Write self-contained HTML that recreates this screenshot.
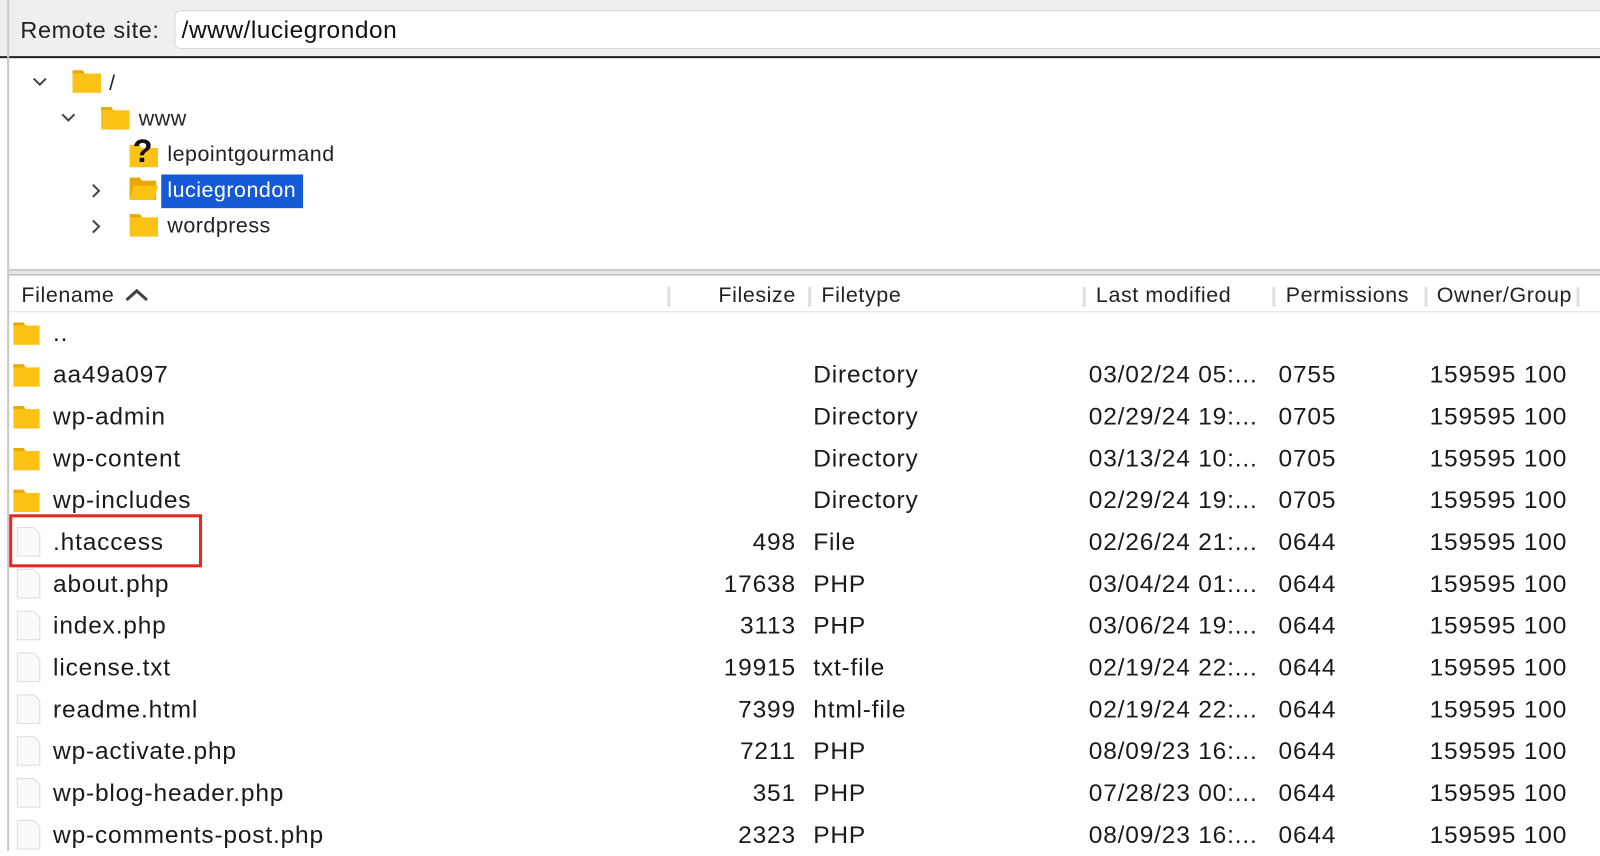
<!DOCTYPE html>
<html><head><meta charset="utf-8"><style>
*{margin:0;padding:0;box-sizing:border-box}
body{width:1600px;height:834px;overflow:hidden;background:#fff;font-family:"Liberation Sans",Arial,sans-serif;color:#1a1a1a;position:relative}
#w{position:absolute;left:0;top:0;width:1600px;height:834px;transform:scale(1.0204);transform-origin:0 0}
.top{position:absolute;left:0;top:0;width:1600px;height:57px;background:#efefef;border-bottom:2px solid #222}
.lb{position:absolute;left:7px;top:0;width:2px;height:834px;background:#c8c8c8}
.lbl{position:absolute;left:20px;top:16px;font-size:23px;letter-spacing:0.6px;color:#222}
.inp{position:absolute;left:171px;top:10px;width:1440px;height:38px;background:#fff;border:1px solid #d8d8d8;border-radius:6px;font-size:24px;letter-spacing:0.5px;padding:5px 6px;color:#111}
.t{position:absolute;font-size:21px;letter-spacing:0.5px;line-height:28px;color:#222}
.fold{position:absolute;width:26px;height:22px}
.split{position:absolute;left:9px;top:264px;width:1591px;height:6px;background:#e6e6e6;border-top:1px solid #aaa;border-bottom:1px solid #aaa}
.hdr{position:absolute;left:9px;top:272px;width:1591px;height:34px;border-bottom:1px solid #e2e2e2;font-size:21px;letter-spacing:0.6px;color:#222}
.hdr span{position:absolute;top:6px}
.sep{position:absolute;top:9px;width:3px;height:20px;background:#e0e0e0}
.r{position:absolute;left:0;width:1600px;height:41px;font-size:24px;letter-spacing:0.8px;line-height:41px;color:#1a1a1a}
.r span{position:absolute;top:0;white-space:nowrap}
.n{left:52px}.s{right:820px;text-align:right}.ty{left:797px}.m{left:1067px}.p{left:1253px}.o{left:1401px}
.fi{position:absolute;left:13px;top:8px;width:26px;height:24px}
</style></head><body><div id="w">
<div class="top"><div class="lbl">Remote site:</div><div class="inp">/www/luciegrondon</div></div>
<div class="lb"></div>

<svg style="position:absolute;left:30px;top:73px" width="18" height="14"><path d="M3 4l6 6 6-6" fill="none" stroke="#444" stroke-width="2"/></svg>
<svg class="fold" style="left:71px;top:67px;width:28px;height:24px" viewBox="0 0 28 24"><path d="M0 2h10l2 3h16v19H0z" fill="#fdc216"/><path d="M0 2h10l2 3h-12z" fill="#e9a800"/></svg>
<div class="t" style="left:107px;top:68px">/</div>

<svg style="position:absolute;left:58px;top:108px" width="18" height="14"><path d="M3 4l6 6 6-6" fill="none" stroke="#444" stroke-width="2"/></svg>
<svg class="fold" style="left:99px;top:103px;width:28px;height:24px" viewBox="0 0 28 24"><path d="M0 2h10l2 3h16v19H0z" fill="#fdc216"/><path d="M0 2h10l2 3h-12z" fill="#e9a800"/></svg>
<div class="t" style="left:136px;top:103px">www</div>

<svg class="fold" style="left:127px;top:140px;width:28px;height:24px" viewBox="0 0 28 24"><path d="M0 2h10l2 3h16v19H0z" fill="#fdc216"/></svg>
<div style="position:absolute;left:130px;top:130px;font-size:32px;font-weight:bold;color:#111;line-height:36px">?</div>
<div class="t" style="left:164px;top:138px">lepointgourmand</div>

<svg style="position:absolute;left:87px;top:178px" width="14" height="18"><path d="M4 3l6 6-6 6" fill="none" stroke="#444" stroke-width="2"/></svg>
<svg class="fold" style="left:127px;top:172px;width:28px;height:24px" viewBox="0 0 28 24"><path d="M0 2h10l2 3h14v19H0z" fill="#e9a800"/><path d="M4 10h24l-4 14H0z" fill="#fdc216"/></svg>
<div style="position:absolute;left:158px;top:171px;width:139px;height:33px;background:#1559d6"></div>
<div class="t" style="left:164px;top:173px;color:#fff">luciegrondon</div>

<svg style="position:absolute;left:87px;top:213px" width="14" height="18"><path d="M4 3l6 6-6 6" fill="none" stroke="#444" stroke-width="2"/></svg>
<svg class="fold" style="left:127px;top:208px;width:28px;height:24px" viewBox="0 0 28 24"><path d="M0 2h10l2 3h16v19H0z" fill="#fdc216"/><path d="M0 2h10l2 3h-12z" fill="#e9a800"/></svg>
<div class="t" style="left:164px;top:208px">wordpress</div>

<div class="split"></div>
<div class="hdr">
<span style="left:12px">Filename</span>
<svg style="position:absolute;left:112px;top:9px" width="26" height="16"><path d="M3 13l10-9 10 9" fill="none" stroke="#444" stroke-width="3"/></svg>
<div class="sep" style="left:645px"></div>
<span style="right:820px">Filesize</span>
<div class="sep" style="left:783px"></div>
<span style="left:796px">Filetype</span>
<div class="sep" style="left:1052px"></div>
<span style="left:1065px">Last modified</span>
<div class="sep" style="left:1238px"></div>
<span style="left:1251px">Permissions</span>
<div class="sep" style="left:1387px"></div>
<span style="left:1399px">Owner/Group</span>
<div class="sep" style="left:1536px"></div>
</div>

<div class="r" style="top:306px"><svg class="fi" viewBox="0 0 26 24"><path d="M0 2h10l2 3h14v19H0z" fill="#fdc216"/><path d="M0 2h10l2 3h-12z" fill="#e9a800"/></svg><span class="n">..</span></div>
<div class="r" style="top:347px"><svg class="fi" viewBox="0 0 26 24"><path d="M0 2h10l2 3h14v19H0z" fill="#fdc216"/><path d="M0 2h10l2 3h-12z" fill="#e9a800"/></svg><span class="n">aa49a097</span><span class="ty">Directory</span><span class="m">03/02/24 05:...</span><span class="p">0755</span><span class="o">159595 100</span></div>
<div class="r" style="top:388px"><svg class="fi" viewBox="0 0 26 24"><path d="M0 2h10l2 3h14v19H0z" fill="#fdc216"/><path d="M0 2h10l2 3h-12z" fill="#e9a800"/></svg><span class="n">wp-admin</span><span class="ty">Directory</span><span class="m">02/29/24 19:...</span><span class="p">0705</span><span class="o">159595 100</span></div>
<div class="r" style="top:429px"><svg class="fi" viewBox="0 0 26 24"><path d="M0 2h10l2 3h14v19H0z" fill="#fdc216"/><path d="M0 2h10l2 3h-12z" fill="#e9a800"/></svg><span class="n">wp-content</span><span class="ty">Directory</span><span class="m">03/13/24 10:...</span><span class="p">0705</span><span class="o">159595 100</span></div>
<div class="r" style="top:470px"><svg class="fi" viewBox="0 0 26 24"><path d="M0 2h10l2 3h14v19H0z" fill="#fdc216"/><path d="M0 2h10l2 3h-12z" fill="#e9a800"/></svg><span class="n">wp-includes</span><span class="ty">Directory</span><span class="m">02/29/24 19:...</span><span class="p">0705</span><span class="o">159595 100</span></div>
<div class="r" style="top:511px"><svg class="fi" style="left:16px;top:5px;width:26px;height:30px" viewBox="0 0 26 30"><path d="M1 1h16l6 6v22H1z" fill="#fafafa" stroke="#ddd"/></svg><span class="n">.htaccess</span><span class="s">498</span><span class="ty">File</span><span class="m">02/26/24 21:...</span><span class="p">0644</span><span class="o">159595 100</span></div>
<div class="r" style="top:552px"><svg class="fi" style="left:16px;top:5px;width:26px;height:30px" viewBox="0 0 26 30"><path d="M1 1h16l6 6v22H1z" fill="#fafafa" stroke="#ddd"/></svg><span class="n">about.php</span><span class="s">17638</span><span class="ty">PHP</span><span class="m">03/04/24 01:...</span><span class="p">0644</span><span class="o">159595 100</span></div>
<div class="r" style="top:593px"><svg class="fi" style="left:16px;top:5px;width:26px;height:30px" viewBox="0 0 26 30"><path d="M1 1h16l6 6v22H1z" fill="#fafafa" stroke="#ddd"/></svg><span class="n">index.php</span><span class="s">3113</span><span class="ty">PHP</span><span class="m">03/06/24 19:...</span><span class="p">0644</span><span class="o">159595 100</span></div>
<div class="r" style="top:634px"><svg class="fi" style="left:16px;top:5px;width:26px;height:30px" viewBox="0 0 26 30"><path d="M1 1h16l6 6v22H1z" fill="#fafafa" stroke="#ddd"/></svg><span class="n">license.txt</span><span class="s">19915</span><span class="ty">txt-file</span><span class="m">02/19/24 22:...</span><span class="p">0644</span><span class="o">159595 100</span></div>
<div class="r" style="top:675px"><svg class="fi" style="left:16px;top:5px;width:26px;height:30px" viewBox="0 0 26 30"><path d="M1 1h16l6 6v22H1z" fill="#fafafa" stroke="#ddd"/></svg><span class="n">readme.html</span><span class="s">7399</span><span class="ty">html-file</span><span class="m">02/19/24 22:...</span><span class="p">0644</span><span class="o">159595 100</span></div>
<div class="r" style="top:716px"><svg class="fi" style="left:16px;top:5px;width:26px;height:30px" viewBox="0 0 26 30"><path d="M1 1h16l6 6v22H1z" fill="#fafafa" stroke="#ddd"/></svg><span class="n">wp-activate.php</span><span class="s">7211</span><span class="ty">PHP</span><span class="m">08/09/23 16:...</span><span class="p">0644</span><span class="o">159595 100</span></div>
<div class="r" style="top:757px"><svg class="fi" style="left:16px;top:5px;width:26px;height:30px" viewBox="0 0 26 30"><path d="M1 1h16l6 6v22H1z" fill="#fafafa" stroke="#ddd"/></svg><span class="n">wp-blog-header.php</span><span class="s">351</span><span class="ty">PHP</span><span class="m">07/28/23 00:...</span><span class="p">0644</span><span class="o">159595 100</span></div>
<div class="r" style="top:798px"><svg class="fi" style="left:16px;top:5px;width:26px;height:30px" viewBox="0 0 26 30"><path d="M1 1h16l6 6v22H1z" fill="#fafafa" stroke="#ddd"/></svg><span class="n">wp-comments-post.php</span><span class="s">2323</span><span class="ty">PHP</span><span class="m">08/09/23 16:...</span><span class="p">0644</span><span class="o">159595 100</span></div>

<div style="position:absolute;left:9px;top:504px;width:189px;height:52px;border:3px solid #e8281e"></div>
</div></body></html>
